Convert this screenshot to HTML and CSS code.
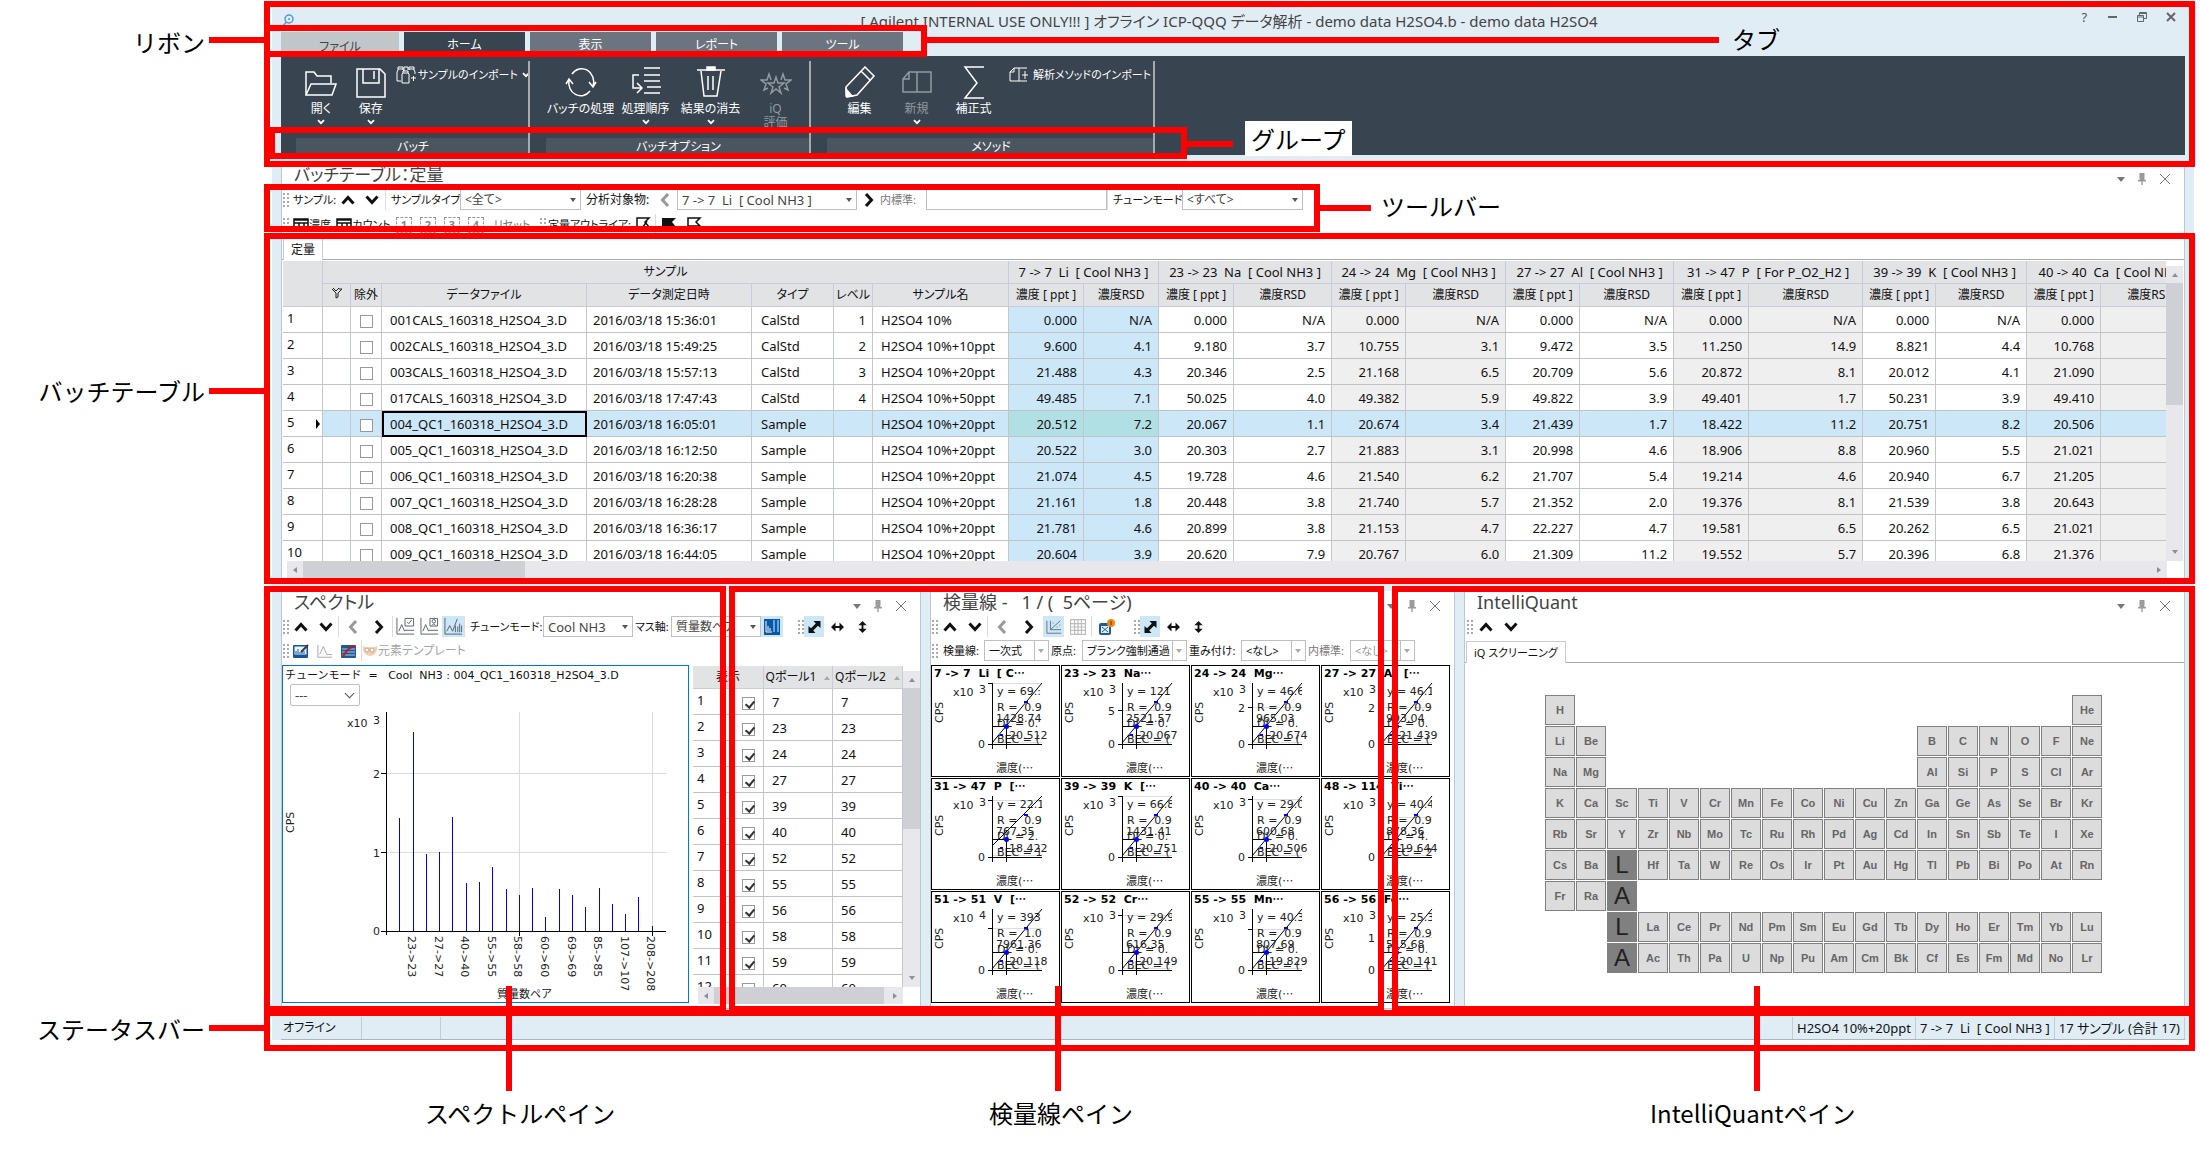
FILE: index.html
```html
<!DOCTYPE html>
<html lang="ja">
<head>
  <meta charset="UTF-8">
  <title>ICP-QQQ データ解析</title>
  <link rel="stylesheet" href="styles.css">
</head>
<body>
  <svg class="sprite" aria-hidden="true">
    <symbol id="i-up" viewBox="0 0 14 10"><path d="M1.500 8.500L7 2.500l5.500 6" fill="none" stroke="currentColor" stroke-width="3"/></symbol>
    <symbol id="i-down" viewBox="0 0 14 10"><path d="M1.500 1.500L7 7.500l5.500-6" fill="none" stroke="currentColor" stroke-width="3"/></symbol>
    <symbol id="i-left" viewBox="0 0 10 14"><path d="M8 1L2.500 7 8 13" fill="none" stroke="currentColor" stroke-width="3"/></symbol>
    <symbol id="i-right" viewBox="0 0 10 14"><path d="M2 1l5.500 6L2 13" fill="none" stroke="currentColor" stroke-width="3"/></symbol>
    <symbol id="i-chev" viewBox="0 0 6 5"><path d="M.5 1L3 3.500 5.500 1" fill="none" stroke="currentColor" stroke-width="1.500"/></symbol>
    <symbol id="i-sheet" viewBox="0 0 16 16"><path d="M1 2h14v12H1zM1 6h14M1 10h14M6 6v8M11 6v8M1 3h14" fill="none" stroke="currentColor" stroke-width="1.500"/></symbol>
    <symbol id="i-flag" viewBox="0 0 16 16"><path d="M2 15V1h12l-4 4 4 4H2" fill="none" stroke="currentColor" stroke-width="1.500"/></symbol>
    <symbol id="i-flagcheck" viewBox="0 0 16 16"><path d="M2 15V1h12l-4 4 4 5H9M4 10l2 3 6-9" fill="none" stroke="currentColor" stroke-width="1.500"/></symbol>
    <symbol id="i-flagfull" viewBox="0 0 16 16"><path d="M1 15V1h14l-4 4 4 5H4v5z" fill="currentColor"/></symbol>
    <symbol id="i-check" viewBox="0 0 20 20"><path d="M1 1v17h18M3 15l3-7 3 7M9 14h10" fill="none" stroke="#56616b"/><path d="M9.500 1.500h9v8h-9zM11.500 5l2 2 3-4" fill="none" stroke="#56616b"/></symbol>
    <symbol id="i-badge" viewBox="0 0 20 20"><path d="M1 1v17h18M3 15l3-7 3 7M9 14h10" fill="none" stroke="#56616b"/><path d="M10.500 1.500h8v8h-8z" fill="none" stroke="#56616b"/><circle cx="14.500" cy="4.500" r="1.800" fill="none" stroke="#56616b"/><path d="M12.500 9l2-2 2 2" fill="none" stroke="#56616b"/></symbol>
    <symbol id="i-peaks" viewBox="0 0 20 20"><path d="M1 1v17h18M3 15l3-6 3 6 5-13M12 16V9M14.500 16v-6M16.500 16V7M18.500 16V9" fill="none" stroke="#56616b"/></symbol>
    <symbol id="i-peak" viewBox="0 0 18 16"><path d="M1 1v14h16M3 12l4-9 4 9h6" fill="none" stroke="#a0a0a0"/></symbol>
    <symbol id="i-edit" viewBox="0 0 16 14"><rect width="15" height="13" y="1" rx="1" fill="#15569a"/><rect x="1.500" y="2.500" width="12" height="8" fill="#e9f4fd"/><path d="M3 10V7M5 10V5M7 10V8M9 10V6M11 10V7" stroke="#15569a"/><path d="M8 8l7-7" stroke="#3a3a3a" stroke-width="2"/></symbol>
    <symbol id="i-bars" viewBox="0 0 16 14"><rect width="15" height="13" y="1" rx="1" fill="#1d5a9c"/><path d="M1 5h13M1 8h13M1 11h13" stroke="#b8c6d4"/><path d="M2 12C5 9 6 3 14 2" fill="none" stroke="#b02020" stroke-width="2"/></symbol>
    <symbol id="i-cols" viewBox="0 0 16 16"><rect width="16" height="16" fill="#0b57a4"/><path d="M2 2v11h6" stroke="#fff" fill="none"/><path d="M4 12V7M6 12V9" stroke="#fff"/><path d="M9 1h2v12H9zM13 1h2v12h-2z" fill="#5ea7e8"/></symbol>
    <symbol id="i-mask" viewBox="0 0 16 12"><path d="M1 1c3 2 5 1 7 1s4 1 7-1c1 6-3 10-7 10S0 7 1 1z" fill="#f6cfae"/><circle cx="5" cy="5" r="2" fill="#fff" stroke="#b9a79a"/><circle cx="10" cy="5" r="2" fill="#fff" stroke="#b9a79a"/></symbol>
    <symbol id="i-diag" viewBox="0 0 12 12"><path d="M5 0h7v7L9.500 4.700 4.700 9.500 7 12H0V5l2.500 2.300 4.800-4.800z" fill="#111"/></symbol>
    <symbol id="i-horz" viewBox="0 0 13 10"><path d="M0 5l4.500-4.500V4h4V.5L13 5 8.500 9.500V6h-4v3.500z" fill="#111"/></symbol>
    <symbol id="i-vert" viewBox="0 0 10 13"><path d="M5 0l4.500 4.500H6v4h3.500L5 13 .5 8.500H4v-4H.5z" fill="#111"/></symbol>
    <symbol id="i-curve" viewBox="0 0 18 16"><path d="M1 1v14h16M5 1v10h12M5 11L16 1M8 3v1M12 8h1M15 6h1" fill="none" stroke="#5f6b75"/></symbol>
    <symbol id="i-grid" viewBox="0 0 14 14"><path d="M.5.5h13v13H.5zM.5 4h13M.5 7h13M.5 10h13M4 .5v13M7 .5v13M10 .5v13" fill="none" stroke="#bdbdbd"/></symbol>
    <symbol id="i-alert" viewBox="0 0 16 16"><rect y="4" width="12" height="12" rx="2" fill="#1c5c9e"/><rect x="2" y="7" width="8" height="7" fill="#e7f1fa"/><path d="M3 13l6-5M3 8l6 5" stroke="#1c5c9e"/><circle cx="12" cy="4" r="4" fill="#ee8a11"/><path d="M12 2v4" stroke="#5b3000"/></symbol>
    <symbol id="i-pin" viewBox="0 0 8 12"><path d="M1.500 0h5v7H8v1.500H4.700V12H3.300V8.500H0V7h1.500z" fill="#9a9a9a"/></symbol>
    <symbol id="i-x" viewBox="0 0 12 12"><path d="M1 1l10 10M11 1L1 11" stroke="#777" fill="none"/></symbol>
    <symbol id="i-tri" viewBox="0 0 8 5"><path d="M0 0h8L4 5z" fill="currentColor"/></symbol>
  </svg>

  <div class="figure">
    <div class="app">
      <div class="titlebar">
        <svg class="key" viewBox="0 0 14 14"><circle cx="8" cy="5" r="4" fill="none" stroke="#4e9bd6" stroke-width="1.500"/><circle cx="8" cy="5" r="1" fill="#4e9bd6"/><path d="M5.500 8L1 13h12" fill="none" stroke="#4e9bd6" stroke-width="1.500"/></svg>
        <h1>[ Agilent INTERNAL USE ONLY!!! ] オフライン ICP-QQQ データ解析 - demo data H2SO4.b - demo data H2SO4</h1>
        <div class="winbtns">
          <button>?</button>
          <button aria-label="最小化"><svg width="10" height="10"><path d="M0 5h9" stroke="#666" stroke-width="2"/></svg></button>
          <button aria-label="元に戻す"><svg width="10" height="10"><path d="M2.500 3V.5h7v6H7M.5 3.500h6v6h-6zM.5 5h6M2.500 1.500h7" fill="none" stroke="#666"/></svg></button>
          <button aria-label="閉じる"><svg width="10" height="10"><path d="M1 1l8 8M9 1L1 9" stroke="#666" stroke-width="2"/></svg></button>
        </div>
      </div>
      <nav class="tabs">
        <button class="file">ファイル</button><button class="active">ホーム</button><button>表示</button><button>レポート</button><button>ツール</button>
      </nav>
      <div class="ribbon">
        <section class="group g-batch">
          <div class="items">
            <button class="big"><svg viewBox="0 0 32 34"><path d="M1 29V6h8l3 4h14v7M1 29l5-11h25l-4 11z"/></svg>開く<svg class="chev"><use href="#i-chev"/></svg></button>
            <button class="big"><svg viewBox="0 0 32 34"><path d="M2 3h23l5 5v23H2zM8 3v14h16V3M19 5v8"/></svg>保存<svg class="chev"><use href="#i-chev"/></svg></button>
            <button class="small"><svg class="sico" viewBox="0 0 20 18"><path d="M5 15H1V6l1-2V1h5v3l1 1M2 3h5M8 5V1h4v3M13 4V1h5v3l1 2v2M13 3h5M6 17V8l1-1V5h5v2l1 1v9zM7 7h5M15 12h5M17.500 10v5"/></svg>サンプルのインポート<svg class="chev"><use href="#i-chev"/></svg></button>
          </div>
          <h2>バッチ</h2>
        </section>
        <section class="group g-option">
          <div class="items">
            <button class="big"><svg viewBox="0 0 32 34"><path d="M7 8A12 13 0 0 1 28 20M25 25A12 13 0 0 1 4 14M24 16l4 5 3-5M1 18l3-5 4 5"/></svg>バッチの処理</button>
            <button class="big"><svg viewBox="0 0 32 34"><path d="M14 2h16M14 9h16M14 15h16M17 21h14M14 27h16M9 9H3v13h8M7 17l5 5-5 5"/></svg>処理順序<svg class="chev"><use href="#i-chev"/></svg></button>
            <button class="big"><svg viewBox="0 0 32 34"><path d="M2 4h28M6 5l3 25h13l4-25M13 10v14M18 10v14"/><path d="M12 1h8v3h-8z" fill="#fff"/></svg>結果の消去<svg class="chev"><use href="#i-chev"/></svg></button>
            <button class="big off" disabled><svg viewBox="0 0 32 34"><path d="M16 11l2 6h6l-5 4 2 6-5-4-5 4 2-6-5-4h6zM11 14l-2-6-2 6H1l5 4-2 6 4-2M21 14l2-6 2 6h6l-5 4 2 6-4-2"/></svg>iQ<br>評価</button>
          </div>
          <h2>バッチオプション</h2>
        </section>
        <section class="group g-method">
          <div class="items">
            <button class="big"><svg viewBox="0 0 32 34"><path d="M2 21L21 1l9 9-17 19-10 2zM17 5l9 9"/><path d="M2 23l6 7H2z" fill="#fff"/></svg>編集</button>
            <button class="big off" disabled><svg viewBox="0 0 32 34"><path d="M2 13l6-7h8v20H2zM8 6v7H2M16 6h14v20H16"/></svg>新規<svg class="chev"><use href="#i-chev"/></svg></button>
            <button class="big"><svg viewBox="0 0 32 34"><path d="M26 1H7l12 16L7 32h19"/></svg>補正式</button>
            <button class="small"><svg class="sico" viewBox="0 0 20 18"><path d="M1 6l4-4h5v13H1zM5 2v4H1M10 2h8M10 15h8M13 9h6M16 5v8"/></svg>解析メソッドのインポート</button>
          </div>
          <h2>メソッド</h2>
        </section>
      </div>

      <section class="panel batch">
        <header><h2>バッチテーブル：定量</h2><div class="dock"><svg width="8" height="5"><use href="#i-tri"/></svg><svg width="8" height="12"><use href="#i-pin"/></svg><svg width="12" height="12"><use href="#i-x"/></svg></div></header>
        <div class="bar bar-sample">
          <i class="grip"></i><span>サンプル:</span>
          <button aria-label="前へ"><svg class="v"><use href="#i-up"/></svg></button>
          <button aria-label="次へ"><svg class="v"><use href="#i-down"/></svg></button>
          <label class="sep" for="stype">サンプルタイプ:</label>
          <div class="combo"><select id="stype"><option>&lt;全て&gt;</option></select></div>
          <label class="end" for="analyte">分析対象物:</label>
          <button class="dim" aria-label="前の分析対象物"><svg class="h"><use href="#i-left"/></svg></button>
          <div class="combo"><select id="analyte"><option>7 -&gt; 7 &nbsp;Li &nbsp;[ Cool NH3 ]</option></select></div>
          <button aria-label="次の分析対象物"><svg class="h"><use href="#i-right"/></svg></button>
          <label class="grey" for="istd">内標準:</label>
          <input id="istd" type="text">
          <label class="sep" for="tune">チューンモード:</label>
          <div class="combo"><select id="tune"><option>&lt;すべて&gt;</option></select></div>
        </div>
        <div class="bar bar-outlier">
          <i class="grip"></i>
          <button><svg class="s"><use href="#i-sheet"/></svg>濃度</button>
          <button><svg class="s"><use href="#i-sheet"/></svg>カウント</button>
          <button class="num">1</button><button class="num">2</button><button class="num">3</button><button class="num">4</button>
          <button class="grey">リセット</button>
          <i class="grip"></i><span>定量アウトライア:</span>
          <button aria-label="全フラグ"><svg class="s"><use href="#i-flagcheck"/></svg></button>
          <button class="sep" aria-label="フラグ"><svg class="s"><use href="#i-flagfull"/></svg></button>
          <button aria-label="フラグなし"><svg class="s"><use href="#i-flag"/></svg></button>
        </div>
        <div class="sheettabs"><button>定量</button></div>
        <div class="gridwrap">
          <div class="gridview"><table class="grid" id="batch"></table></div>
          <div class="vscroll"><svg width="6" height="4"><path d="M0 4h6L3 0z"/></svg><div class="thumb"></div><svg width="6" height="4"><path d="M0 0h6L3 4z"/></svg></div>
        </div>
        <div class="hscroll wide"><svg width="4" height="6"><path d="M4 0v6L0 3z"/></svg><div class="thumb"></div><svg width="4" height="6"><path d="M0 0v6l4-3z"/></svg></div>
      </section>

      <div class="panes">
        <section class="panel spectrum">
          <header><h2>スペクトル</h2><div class="dock"><svg width="8" height="5"><use href="#i-tri"/></svg><svg width="8" height="12"><use href="#i-pin"/></svg><svg width="12" height="12"><use href="#i-x"/></svg></div></header>
          <div class="bar bar-spec">
            <i class="grip"></i>
            <button aria-label="前へ"><svg class="v"><use href="#i-up"/></svg></button>
            <button aria-label="次へ"><svg class="v"><use href="#i-down"/></svg></button>
            <button class="dim sep" aria-label="前のページ"><svg class="h"><use href="#i-left"/></svg></button>
            <button aria-label="次のページ"><svg class="h"><use href="#i-right"/></svg></button>
            <button class="sep" aria-label="選択"><svg class="m"><use href="#i-check"/></svg></button>
            <button aria-label="ラベル"><svg class="m"><use href="#i-badge"/></svg></button>
            <button class="on" aria-label="ピーク"><svg class="m"><use href="#i-peaks"/></svg></button>
            <label class="sep" for="stune">チューンモード:</label>
            <div class="combo"><select id="stune"><option>Cool NH3</option></select></div>
            <label for="mass">マス軸:</label>
            <div class="combo"><select id="mass"><option>質量数ペア</option></select></div>
            <button class="on" aria-label="表"><svg class="s"><use href="#i-cols"/></svg></button>
            <i class="grip"></i>
            <button class="on" aria-label="自動"><svg class="a"><use href="#i-diag"/></svg></button>
            <button aria-label="横"><svg class="a"><use href="#i-horz"/></svg></button>
            <button aria-label="縦"><svg class="a"><use href="#i-vert"/></svg></button>
          </div>
          <div class="bar bar-spec2">
            <i class="grip"></i>
            <button aria-label="編集"><svg class="s"><use href="#i-edit"/></svg></button>
            <button aria-label="ピーク表示"><svg class="s"><use href="#i-peak"/></svg></button>
            <button aria-label="重ね書き"><svg class="s"><use href="#i-bars"/></svg></button>
            <button class="sep faint"><svg class="s"><use href="#i-mask"/></svg>元素テンプレート</button>
          </div>
          <div class="specbody">
            <div class="chart">
              <p>チューンモード&nbsp; =&nbsp;&nbsp; Cool&nbsp; NH3 : 004_QC1_160318_H2SO4_3.D</p>
              <div class="combo round"><select aria-label="要素"><option>---</option></select></div>
              <svg id="spec" width="404" height="296"></svg>
            </div>
            <div class="pairs">
              <div class="gridwrap">
                <div class="gridview"><table class="grid" id="pairs"></table></div>
                <div class="vscroll"><svg width="6" height="4"><path d="M0 4h6L3 0z"/></svg><div class="thumb"></div><svg width="6" height="4"><path d="M0 0h6L3 4z"/></svg></div>
              </div>
              <div class="hscroll"><svg width="4" height="6"><path d="M4 0v6L0 3z"/></svg><div class="thumb"></div><svg width="4" height="6"><path d="M0 0v6l4-3z"/></svg></div>
            </div>
          </div>
        </section>

        <section class="panel calib">
          <header><h2>検量線 -&nbsp;&nbsp; 1 / (&nbsp; 5ページ)</h2><div class="dock"><svg width="8" height="5"><use href="#i-tri"/></svg><svg width="8" height="12"><use href="#i-pin"/></svg><svg width="12" height="12"><use href="#i-x"/></svg></div></header>
          <div class="bar bar-cal">
            <i class="grip"></i>
            <button aria-label="前へ"><svg class="v"><use href="#i-up"/></svg></button>
            <button aria-label="次へ"><svg class="v"><use href="#i-down"/></svg></button>
            <button class="dim sep" aria-label="前のページ"><svg class="h"><use href="#i-left"/></svg></button>
            <button aria-label="次のページ"><svg class="h"><use href="#i-right"/></svg></button>
            <button class="on" aria-label="検量線"><svg class="s"><use href="#i-curve"/></svg></button>
            <button aria-label="表"><svg class="s"><use href="#i-grid"/></svg></button>
            <button class="sep" aria-label="警告"><svg class="s"><use href="#i-alert"/></svg></button>
            <i class="grip"></i>
            <button class="on" aria-label="自動"><svg class="a"><use href="#i-diag"/></svg></button>
            <button aria-label="横"><svg class="a"><use href="#i-horz"/></svg></button>
            <button aria-label="縦"><svg class="a"><use href="#i-vert"/></svg></button>
          </div>
          <div class="bar bar-cal2">
            <i class="grip"></i>
            <label for="fit">検量線:</label><div class="combo split"><select id="fit"><option>一次式</option></select></div>
            <label for="origin">原点:</label><div class="combo split"><select id="origin"><option>ブランク強制通過</option></select></div>
            <label for="weight">重み付け:</label><div class="combo split"><select id="weight"><option>&lt;なし&gt;</option></select></div>
            <label class="grey" for="cistd">内標準:</label><div class="combo split"><select id="cistd" disabled><option>&lt;なし&gt;</option></select></div>
          </div>
          <div class="curves" id="curves"></div>
        </section>

        <section class="panel iq">
          <header><h2>IntelliQuant</h2><div class="dock"><svg width="8" height="5"><use href="#i-tri"/></svg><svg width="8" height="12"><use href="#i-pin"/></svg><svg width="12" height="12"><use href="#i-x"/></svg></div></header>
          <div class="bar bar-iq">
            <i class="grip"></i>
            <button aria-label="前へ"><svg class="v"><use href="#i-up"/></svg></button>
            <button aria-label="次へ"><svg class="v"><use href="#i-down"/></svg></button>
          </div>
          <div class="sheettabs"><button>iQ スクリーニング</button></div>
          <div class="iqbody"><div class="periodic" id="periodic"></div></div>
        </section>
      </div>

      <footer class="status">
        <span class="mode">オフライン</span><span class="blank"></span><span class="fill"></span>
        <span>H2SO4 10%+20ppt</span><span>7 -&gt; 7 &nbsp;Li &nbsp;[ Cool NH3 ]</span><span>17 サンプル (合計 17)</span>
      </footer>
    </div>

    <!-- 注釈 -->
    <div class="notes">
      <div class="frame f-ribbon"></div>
      <div class="frame f-tabs"></div>
      <div class="frame f-group"></div>
      <div class="frame f-toolbar"></div>
      <div class="frame f-table"></div>
      <div class="frame f-spec"></div>
      <div class="frame f-cal"></div>
      <div class="frame f-iq"></div>
      <div class="frame f-status"></div>
      <i class="line l-ribbon"></i><i class="line l-tabs"></i><i class="line l-group"></i><i class="line l-toolbar"></i>
      <i class="line l-table"></i><i class="line l-status"></i><i class="line l-spec"></i><i class="line l-cal"></i><i class="line l-iq"></i>
      <span class="note left n-ribbon">リボン</span>
      <span class="note n-tabs">タブ</span>
      <span class="note n-group">グループ</span>
      <span class="note n-toolbar">ツールバー</span>
      <span class="note left n-table">バッチテーブル</span>
      <span class="note left n-status">ステータスバー</span>
      <span class="note n-spec">スペクトルペイン</span>
      <span class="note n-cal">検量線ペイン</span>
      <span class="note n-iq">IntelliQuantペイン</span>
    </div>
  </div>
  <script src="script.js"></script>
</body>
</html>
```
FILE: styles.css
```css
* { box-sizing: border-box; }
body { margin: 0; background: #fff; color: #111; font: 13px/16px "Noto Sans", "Noto Sans CJK JP", sans-serif; font-feature-settings: "palt"; }
h1, h2, p { margin: 0; font-weight: normal; }
button, select, input { font: inherit; font-feature-settings: inherit; color: inherit; margin: 0; padding: 0; border: 0; background: none; border-radius: 0; }
button { display: flex; align-items: center; justify-content: center; white-space: nowrap; }
.sprite { position: absolute; width: 0; height: 0; }
.figure { position: relative; padding: 4px 6px 105px 272px; }
.app { background: #e0edf5; padding: 0 9px; }

/* title bar and ribbon */
.titlebar { display: flex; align-items: center; height: 28px; padding: 6px 0 0; }
.titlebar h1 { flex: 1; text-align: center; font-size: 15px; color: #444; padding-left: 93px; white-space: nowrap; }
.key { width: 14px; height: 14px; }
.winbtns { display: flex; width: 115px; margin-bottom: 8px; color: #555; }
.winbtns button { flex: 1; }
.tabs { display: flex; gap: 5px; height: 24px; }
.tabs button { width: 121px; background: #6c757f; color: #fff; font-size: 12px; padding-top: 2px; }
.tabs .file { width: 118px; background: #c1c7c9; color: #444; padding-top: 5px; }
.tabs .active { background: #38444f; }
.ribbon { display: flex; height: 99px; background: #38444f; color: #fff; font-size: 12px; }
.group { display: flex; flex-direction: column; position: relative; margin-right: 1px; }
.group::after { content: ""; position: absolute; right: 0; top: 5px; bottom: 2px; width: 2px; background: #a3abb1; }
.g-batch { width: 249px; }
.g-option { width: 280px; }
.g-method { width: 343px; }
.group h2 { height: 17px; margin-left: 15px; background: #4b5560; text-align: center; font-size: 12px; line-height: 17px; }
.items { display: flex; flex: 1; padding: 10px 0 0 17px; align-items: flex-start; }
.big { flex-direction: column; width: 65px; line-height: 14px; }
.big > svg { width: 32px; height: 34px; margin-bottom: 2px; }
.g-batch .big { width: 50px; }
.g-batch .items { padding-left: 15px; }
.g-method .items { padding-left: 19px; }
.g-method .big { width: 57px; }
.ribbon svg { fill: none; stroke: #fff; stroke-width: 1.5; }
.ribbon .off { color: #929aa1; }
.ribbon .off svg { stroke: #929aa1; }
.ribbon .chev { width: 8px; height: 6px; margin: 3px 0 0; stroke: none; color: #fff; }
.small { font-size: 11px; gap: 2px; }
.small .chev { margin: 0 0 0 2px; }
.small .sico { width: 20px; height: 18px; stroke-width: 1; }
.g-method .small { padding-left: 7px; gap: 4px; }

/* panels */
.panel { background: #fff; border: 1px solid #bcc8cf; border-top-color: #e0edf5; }
.panel header { display: flex; justify-content: space-between; height: 25px; padding: 0 15px 3px 12px; align-items: center; }
.panel h2 { font-size: 18px; line-height: 20px; color: #444; }
.dock { display: flex; gap: 13px; align-items: center; padding-top: 8px; margin-right: -2px; color: #777; }
.batch { margin-top: 9px; }
.batch header { height: 24px; align-items: flex-start; }
.batch h2 { font-size: 17px; }
.bar { display: grid; height: 21px; align-items: center; white-space: nowrap; font-size: 12px; }
.bar > * { height: 21px; display: flex; align-items: center; min-width: 0; }
.bar label { font-size: 11px; }
.bar .grip { height: 16px; width: 7px; justify-self: end; background: radial-gradient(circle, #aaa 1px, transparent 1px) 0 0 / 4px 4px; }
.bar .sep { border-left: 1px solid #ddd; padding-left: 5px; }
.bar button.sep { padding: 0; }
.bar .end { padding-left: 5px; font-size: 12px; }
.bar .grey { color: #777; }
.bar .faint { color: #a5a5a5; padding-left: 4px; justify-content: flex-start; }
.bar .dim { color: #999; }
.bar .on { background: #cce7f8; }
.bar input, .combo { border: 1px solid #bcc0c3; background: #fff; }
.v { width: 14px; height: 10px; }
.h { width: 10px; height: 14px; }
.s { width: 16px; height: 16px; }
.m { width: 19px; height: 19px; }
.a { width: 13px; height: 12px; }
.bar .num { border: 1px dashed #999; color: #888; width: 16px; height: 16px; justify-self: center; font-weight: bold; }
.combo { position: relative; }
.combo select { appearance: none; width: 100%; height: 100%; padding: 0 10px 0 4px; color: #444; background: none; }
.combo::after { content: ""; position: absolute; right: 4px; top: 8px; border: 3px solid transparent; border-top: 4px solid #555; border-bottom: 0; pointer-events: none; }
#analyte, #stune { font-size: 13px; }
.split select { padding-right: 13px; color: #111; font-size: 11px; }
.split select:disabled { color: #999; opacity: 1; }
.split::before { content: ""; position: absolute; right: 13px; top: 0; bottom: 0; width: 1px; background: #bcc0c3; }
.split::after { border-top-color: #aaa; }
.bar-sample { grid-template-columns: 7px 48px 21px 27px 75px 121px 71px 25px 180px 23px 46px 181px 75px 121px; }
.bar-sample > span { padding-left: 4px; font-size: 11px; }
.bar-outlier { grid-template-columns: 7px 46px 57px repeat(4, 24px) 48px 10px 84px 25px 26px 25px; margin-top: 4px; font-size: 11px; }
.bar-outlier > span { padding-left: 2px; }
.bar-spec { grid-template-columns: 7px 24px 25px 28px 26px 25px 25px 22px 79px 90px 38px 90px 22px 21px 20px 27px 23px; }
.bar-spec2 { grid-template-columns: 7px 24px 24px 24px 110px; margin: 3px 0 4px; }
.bar-cal { grid-template-columns: 7px 24px 25px 28px 28px 21px 27px 30px 19px 20px 27px 22px; }
.bar-cal2 { grid-template-columns: 7px 46px 65px 33px 105px 54px 65px 44px 65px; margin: 3px 0 4px; }
.bar-cal2 label, .bar-spec label { padding-left: 2px; }
.bar-cal2 label:first-of-type { padding-left: 5px; }
.bar-iq { grid-template-columns: 8px 25px 25px; margin-bottom: 4px; }
.sheettabs { display: flex; height: 22px; border-bottom: 1px solid #a9a9a9; font-size: 12px; }
.batch .sheettabs { margin-top: 3px; }
.sheettabs button { margin: 0 0 -1px 1px; padding: 0 7px; background: #fff; border: 1px solid #ccc; border-bottom: 0; }
.iq .sheettabs { font-size: 11px; }

/* data grids */
.gridwrap { display: flex; }
.gridview { flex: 1; overflow: hidden; }
.batch .gridwrap { height: 301px; padding: 1px 1px 0; }
.grid { table-layout: fixed; width: 0; border-spacing: 0; }
.grid th, .grid td { height: 26px; padding: 0 6px; border-right: 1px solid #c3c7ca; border-bottom: 1px solid #bfc3c5; white-space: pre; overflow: hidden; text-align: left; font-weight: normal; }
.grid thead th { height: 23px; background: #e1e3e5; border-color: #c9cbdd; text-align: center; padding: 0; font-size: 12px; }
.grid thead .mass { font-size: 13px; }
.grid tbody th { padding: 0 4px 4px; position: relative; }
.grid .n { text-align: right; }
.grid .file { padding-left: 8px; }
.grid .type { padding-left: 9px; }
.grid .name { padding-left: 8px; }
.grid .alt { background: #efefef; }
.grid .li, .grid .sel td { background: #cce7f8; }
.grid .sel .li { background: #b0e0e4; }
.grid .sel .file { outline: 2px solid #000; outline-offset: -2px; }
.grid .sel th::after { content: ""; position: absolute; right: 2px; top: 8px; border: 5px solid transparent; border-left: 4px solid #000; border-right: 0; }
.grid .c { text-align: center; padding: 0; }
.grid input { appearance: none; width: 13px; height: 13px; border: 1px solid #999; background: #fff; vertical-align: middle; }
.grid input:checked::after { content: ""; display: block; width: 4px; height: 7px; margin: 1px 4px; border: solid #333; border-width: 0 2px 2px 0; rotate: 40deg; }
.vscroll { width: 17px; background: #e7e7ec; display: flex; flex-direction: column; align-items: center; padding: 7px 0; gap: 6px; fill: #8a8f99; margin-top: 5px; }
.vscroll .thumb { width: 17px; height: 122px; background: #cfd0d6; margin-bottom: auto; }
.hscroll { height: 17px; background: #e7e7ec; display: flex; align-items: center; padding: 0 6px; gap: 6px; fill: #8a8f99; margin: 0 17px 0 5px; }
.hscroll .thumb { width: 170px; height: 17px; background: #cfd0d6; margin-right: auto; }
.wide .thumb { width: 222px; }
.wide { margin-bottom: 3px; }

/* lower panes */
.panes { display: flex; gap: 9px; margin-top: 8px; }
.spectrum { width: 640px; }
.calib { width: 525px; }
.iq { flex: 1; }
.specbody { display: flex; height: 341px; }
.chart { width: 407px; height: 338px; border: 1px solid #0078d7; margin-right: 4px; }
.chart p { font: 11px/16px "DejaVu Sans", "Noto Sans CJK JP", sans-serif; padding: 2px 0 0 2px; white-space: nowrap; }
.round { width: 70px; height: 22px; margin: 0 0 0 7px; border-radius: 2px; }
.round::after { width: 6px; height: 6px; right: 6px; top: 5px; border: solid #555; border-width: 0 1px 1px 0; rotate: 45deg; }
.chart svg { display: block; }
.pairs { width: 227px; padding-top: 1px; }
.pairs .gridwrap { height: 321px; }
.pairs .vscroll .thumb { height: 141px; }
.grid .sort::after { content: ""; display: inline-block; margin-left: 8px; vertical-align: middle; border: 3px solid transparent; border-bottom: 4px solid #aaa; border-top: 0; }
.curves { display: grid; grid-template-columns: repeat(4, 129px); gap: 1px; }
.curves svg { border: 1px solid #000; height: 112px; width: 129px; }
svg text { font: 11px "DejaVu Sans", "Noto Sans CJK JP", sans-serif; fill: #222; white-space: pre; }
svg text.ttl { font-weight: bold; fill: #000; }
svg .dots { font-family: "Noto Sans CJK JP"; }
.iqbody { height: 345px; display: flex; justify-content: center; padding: 32px 2px 0 0; border-bottom: 1px solid #a9a9a9; }
.periodic { display: grid; grid-template-columns: repeat(18, 30px); grid-auto-rows: 30px; gap: 1px; }
.periodic button { border: 1px solid #808080; background: #dcdcdc; color: #666; font: bold 11px "Liberation Sans", sans-serif; }
.periodic .series { background: #808080; color: #222; font: 24px "Liberation Sans", sans-serif; }

/* status bar */
.status { display: flex; height: 31px; padding-top: 8px; border-bottom: 1px solid #aab6bd; white-space: nowrap; margin-bottom: 8px; }
.status span { border-right: 1px solid #c3ccd2; padding: 3px 4px; }
.status .mode { width: 81px; font-size: 12px; padding-left: 2px; }
.status .blank { width: 79px; }
.status .fill { flex: 1; }

/* callouts drawn over the window */
.frame { position: absolute; border: 6px solid #f00; }
.f-ribbon { left: 264px; right: 5px; top: 1px; height: 166px; }
.f-tabs { left: 264px; width: 663px; top: 25px; height: 32px; }
.f-group { left: 269px; width: 918px; top: 127px; height: 32px; }
.f-toolbar { left: 264px; width: 1056px; top: 184px; height: 48px; }
.f-table { left: 264px; right: 5px; top: 233px; height: 351px; }
.f-spec { left: 264px; width: 462px; top: 586px; height: 426px; }
.f-cal { left: 729px; width: 655px; top: 586px; height: 426px; }
.f-iq { left: 1392px; right: 5px; top: 586px; height: 426px; }
.f-status { left: 264px; right: 5px; top: 1010px; height: 41px; }
.line { position: absolute; background: #f00; height: 6px; }
.l-ribbon, .l-table, .l-status { left: 209px; width: 56px; }
.l-ribbon { top: 37px; }
.l-table { top: 388px; }
.l-status { top: 1025px; }
.l-tabs { left: 926px; width: 793px; top: 37px; }
.l-group { left: 1186px; width: 47px; top: 141px; }
.l-toolbar { left: 1319px; width: 52px; top: 205px; }
.l-spec, .l-cal, .l-iq { top: 986px; width: 6px; height: 105px; }
.l-spec { left: 506px; }
.l-cal { left: 1055px; }
.l-iq { left: 1754px; }
.note { position: absolute; font: 24px/35px "Noto Sans CJK JP", sans-serif; color: #000; white-space: nowrap; font-feature-settings: normal; }
.left { left: 0; width: 205px; text-align: right; }
.n-ribbon { top: 24px; }
.n-tabs { left: 1732px; top: 21px; }
.n-group { left: 1245px; top: 121px; padding: 0 6px; background: #fff; }
.n-toolbar { left: 1381px; top: 188px; }
.n-table { top: 373px; }
.n-status { top: 1011px; }
.n-spec { left: 425px; top: 1095px; }
.n-cal { left: 989px; top: 1095px; }
.n-iq { left: 1650px; top: 1095px; }
```
FILE: script.js
```js
// batch table
var widths = [40, 28, 31, 205, 165, 82, 39, 136, 75, 75, 75, 98, 74, 100, 74, 94, 75, 114, 73, 91, 74, 100];
var analytes = ['7 -> 7  Li  [ Cool NH3 ]', '23 -> 23  Na  [ Cool NH3 ]', '24 -> 24  Mg  [ Cool NH3 ]', '27 -> 27  Al  [ Cool NH3 ]', '31 -> 47  P  [ For P_O2_H2 ]', '39 -> 39  K  [ Cool NH3 ]', '40 -> 40  Ca  [ Cool NH3 ]'];
var rows = [
  ['001CALS_160318_H2SO4_3.D', '15:36:01', 'CalStd', '1', '', '0.000 N/A 0.000 N/A 0.000 N/A 0.000 N/A 0.000 N/A 0.000 N/A 0.000'],
  ['002CALS_160318_H2SO4_3.D', '15:49:25', 'CalStd', '2', '+10ppt', '9.600 4.1 9.180 3.7 10.755 3.1 9.472 3.5 11.250 14.9 8.821 4.4 10.768'],
  ['003CALS_160318_H2SO4_3.D', '15:57:13', 'CalStd', '3', '+20ppt', '21.488 4.3 20.346 2.5 21.168 6.5 20.709 5.6 20.872 8.1 20.012 4.1 21.090'],
  ['017CALS_160318_H2SO4_3.D', '17:47:43', 'CalStd', '4', '+50ppt', '49.485 7.1 50.025 4.0 49.382 5.9 49.822 3.9 49.401 1.7 50.231 3.9 49.410'],
  ['004_QC1_160318_H2SO4_3.D', '16:05:01', 'Sample', '', '+20ppt', '20.512 7.2 20.067 1.1 20.674 3.4 21.439 1.7 18.422 11.2 20.751 8.2 20.506'],
  ['005_QC1_160318_H2SO4_3.D', '16:12:50', 'Sample', '', '+20ppt', '20.522 3.0 20.303 2.7 21.883 3.1 20.998 4.6 18.906 8.8 20.960 5.5 21.021'],
  ['006_QC1_160318_H2SO4_3.D', '16:20:38', 'Sample', '', '+20ppt', '21.074 4.5 19.728 4.6 21.540 6.2 21.707 5.4 19.214 4.6 20.940 6.7 21.205'],
  ['007_QC1_160318_H2SO4_3.D', '16:28:28', 'Sample', '', '+20ppt', '21.161 1.8 20.448 3.8 21.740 5.7 21.352 2.0 19.376 8.1 21.539 3.8 20.643'],
  ['008_QC1_160318_H2SO4_3.D', '16:36:17', 'Sample', '', '+20ppt', '21.781 4.6 20.899 3.8 21.153 4.7 22.227 4.7 19.581 6.5 20.262 6.5 21.021'],
  ['009_QC1_160318_H2SO4_3.D', '16:44:05', 'Sample', '', '+20ppt', '20.604 3.9 20.620 7.9 20.767 6.0 21.309 11.2 19.552 5.7 20.396 6.8 21.376']
];
function esc(s) { return s.replace(/</g, '&lt;').replace(/>/g, '&gt;'); }
function cols(list) {
  return '<colgroup>' + list.map(function (w) { return '<col style="width:' + w + 'px">'; }).join('') + '</colgroup>';
}

var html = cols(widths) + '<thead><tr><th rowspan="2"></th><th colspan="7">サンプル</th>';
analytes.forEach(function (a) { html += '<th class="mass" colspan="2">' + esc(a) + '</th>'; });
html += '</tr><tr><th><svg width="12" height="12"><path d="M1 2l4 4v5l2-1V6l4-4M2 1l3 3 3-3M8 2h3" fill="none" stroke="#222"/></svg></th><th>除外</th><th>データファイル</th><th>データ測定日時</th><th>タイプ</th><th>レベル</th><th>サンプル名</th>';
analytes.forEach(function () { html += '<th>濃度 [ ppt ]</th><th>濃度RSD</th>'; });
html += '</tr></thead><tbody>';
rows.forEach(function (r, i) {
  html += '<tr' + (i === 4 ? ' class="sel"' : '') + '><th>' + (i + 1) + '</th><td></td><td class="c"><input type="checkbox" aria-label="除外"></td>' +
    '<td class="file">' + r[0] + '</td><td>2016/03/18 ' + r[1] + '</td><td class="type">' + r[2] + '</td><td class="n">' + r[3] + '</td><td class="name">H2SO4 10%' + r[4] + '</td>';
  var v = r[5].split(' ');
  for (var k = 0; k < 14; k++) {
    var pair = k >> 1;
    html += '<td class="n' + (pair === 0 ? ' li' : pair % 2 === 0 ? ' alt' : '') + '">' + (v[k] || '') + '</td>';
  }
  html += '</tr>';
});
document.getElementById('batch').innerHTML = html + '</tbody>';

// mass pair list
html = cols([41, 30, 69, 70]) + '<thead><tr><th colspan="2">表示</th><th class="sort">Qポール1</th><th class="sort">Qポール2</th></tr></thead><tbody>';
[7, 23, 24, 27, 39, 40, 52, 55, 56, 58, 59, 60].forEach(function (m, i) {
  html += '<tr><th>' + (i + 1) + '</th><td class="c"><input type="checkbox" aria-label="表示" checked></td><td class="name">' + m + '</td><td class="name">' + m + '</td></tr>';
});
document.getElementById('pairs').innerHTML = html + '</tbody>';

// spectrum: bar x and height above the base line
var bars = [[116, 113], [130, 199], [143, 77], [156, 79], [169, 114], [183, 48], [196, 49], [209, 64], [223, 42], [236, 36], [249, 43], [262, 14], [276, 42], [289, 36], [302, 24], [316, 43], [329, 27], [342, 17], [355, 34], [369, 5]];
var s = '<path d="M104 67.500h280M104 146.500h280M236.500 6v218M369.500 6v218" stroke="#dcdcdc" fill="none"/>';
bars.forEach(function (b) { s += '<path d="M' + b[0] + '.5 225v-' + b[1] + '" stroke="#00f"/>'; });
s += '<path d="M103.500 6v223M98 67.500h5M98 146.500h5M98 225.500h285M236.500 225v5M369.500 225v5" stroke="#000" fill="none"/>';
s += '<text x="64" y="21">x10</text><text x="90" y="18">3</text><text x="90" y="72">2</text><text x="90" y="151">1</text><text x="90" y="229">0</text>';
['23->23', '27->27', '40->40', '55->55', '58->58', '60->60', '69->69', '85->85', '107->107', '208->208'].forEach(function (t, i) {
  s += '<text transform="translate(' + Math.round(125 + i * 26.6) + ' 230) rotate(90)">' + esc(t) + '</text>';
});
s += '<text x="214" y="292">質量数ペア</text><text transform="translate(11 127) rotate(-90)">CPS</text>';
document.getElementById('spec').innerHTML = s;

// calibration curves: title, exponent, tick label, tick y, slope, R, DL, BEC, cps, conc
var curves = [
  ['7 -> 7  Li  [ C', 3, '', 17, '69.:', '0.9', '0.', '(', '1428.74', '20.512'],
  ['23 -> 23  Na', 3, '5', 44, '121', '0.9', '0.', '(', '2521.57', '20.067'],
  ['24 -> 24  Mg', 3, '2', 41, '46.6', '0.9', '0.', '(', '965.03', '20.674'],
  ['27 -> 27  Al  [', 3, '2', 41, '46.1', '0.9', '0.', '(', '993.04', '21.439'],
  ['31 -> 47  P  [', 3, '', 21, '22.1', '0.9', '2.', '1', '767.35', '18.422'],
  ['39 -> 39  K  [', 3, '', 17, '66.8', '0.9', '0.', '(', '1431.41', '20.751'],
  ['40 -> 40  Ca', 3, '', 20, '29.0', '0.9', '0.', '(', '600.68', '20.506'],
  ['48 -> 114  Ti', 3, '', 38, '40.4', '0.9', '4.', '2', '878.36', '19.644'],
  ['51 -> 51  V  [', 4, '', 36, '393', '1.0', '0.', '(', '7961.36', '20.118'],
  ['52 -> 52  Cr', 3, '', 23, '29.9', '0.9', '0.', '(', '616.35', '20.149'],
  ['55 -> 55  Mn', 3, '', 37, '40.3', '0.9', '0.', '(', '807.69', '19.829'],
  ['56 -> 56  Fe', 3, '1', 45, '25.3', '0.9', '0.', '(', '515.68', '20.141']
];
html = '';
curves.forEach(function (c, i) {
  var y0 = i === 4 ? 67 : 77;
  html += '<svg viewBox="0 0 127 110"><clipPath id="c' + i + '"><rect x="60" y="14" width="50" height="70"/></clipPath>' +
    '<path d="M60 ' + c[3] + '.5h50M60 76.500h50" stroke="#ddd"/>' +
    '<text class="ttl" x="2" y="11">' + esc(c[0]) + '<tspan class="dots">…</tspan></text>' +
    '<text x="21" y="30">x10</text><text x="47" y="27">' + c[1] + '</text>' +
    '<text transform="translate(11 57) rotate(-90)">CPS</text>' +
    '<text x="46" y="82">0</text><text x="46" y="' + (c[3] + 5) + '">' + c[2] + '</text>' +
    '<g clip-path="url(#c' + i + ')"><text x="65" y="29">y = ' + c[4] + '</text><text x="65" y="45">R =  ' + c[5] + '</text>' +
    '<text x="65" y="61">DL = ' + c[6] + '</text><text x="65" y="77">BEC = ' + c[7] + '</text></g>' +
    '<path d="M60.500 17v66M56 78.500h54M56 ' + c[3] + '.5h4M60 60.500h14M74.500 61v22M60 ' + y0 + 'L110 17" stroke="#000" fill="none"/>' +
    '<circle cx="74.500" cy="60.500" r="2.500" fill="#00f"/><path d="M92 36h4M68 69h3" stroke="#00f" stroke-width="2"/>' +
    '<text x="64" y="56">' + c[8] + '</text><text x="77" y="73">' + c[9] + '</text>' +
    '<text x="64" y="106">濃度(<tspan class="dots">…</tspan></text></svg>';
});
document.getElementById('curves').innerHTML = html;

// periodic table, "." is an empty cell
var table = [
  'H . . . . . . . . . . . . . . . . He',
  'Li Be . . . . . . . . . . B C N O F Ne',
  'Na Mg . . . . . . . . . . Al Si P S Cl Ar',
  'K Ca Sc Ti V Cr Mn Fe Co Ni Cu Zn Ga Ge As Se Br Kr',
  'Rb Sr Y Zr Nb Mo Tc Ru Rh Pd Ag Cd In Sn Sb Te I Xe',
  'Cs Ba *L Hf Ta W Re Os Ir Pt Au Hg Tl Pb Bi Po At Rn',
  'Fr Ra *A . . . . . . . . . . . . . . .',
  '. . *L La Ce Pr Nd Pm Sm Eu Gd Tb Dy Ho Er Tm Yb Lu',
  '. . *A Ac Th Pa U Np Pu Am Cm Bk Cf Es Fm Md No Lr'
];
document.getElementById('periodic').innerHTML = table.join(' ').split(' ').map(function (e) {
  if (e === '.') return '<span></span>';
  if (e[0] === '*') return '<button class="series">' + e[1] + '</button>';
  return '<button>' + e + '</button>';
}).join('');
```
